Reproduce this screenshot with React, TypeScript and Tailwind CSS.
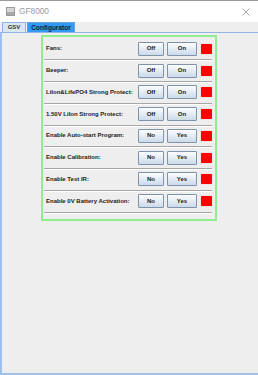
import React from "react";

const rows = [
  { label: "Fans:", a: "Off", b: "On" },
  { label: "Beeper:", a: "Off", b: "On" },
  { label: "LiIon&LifePO4 Strong Protect:", a: "Off", b: "On" },
  { label: "1.50V LiIon Strong Protect:", a: "Off", b: "On" },
  { label: "Enable Auto-start Program:", a: "No", b: "Yes" },
  { label: "Enable Calibration:", a: "No", b: "Yes" },
  { label: "Enable Test IR:", a: "No", b: "Yes" },
  { label: "Enable 0V Battery Activation:", a: "No", b: "Yes" },
];

function Btn({ text, w }: { text: string; w: string }) {
  return (
    <div
      className={`${w} h-[14px] flex items-center justify-center border border-[#7f93ab] rounded-[1px] bg-gradient-to-b from-[#fbfdff] to-[#ccdaea] text-[6px] font-bold text-[#1a1a1a]`}
    >
      {text}
    </div>
  );
}

export default function App() {
  return (
    <div
      className="w-[258px] h-[375px] flex flex-col bg-[#eeeeee] overflow-hidden"
      style={{ fontFamily: '"Liberation Sans", Arial, sans-serif' }}
    >
      {/* Title bar */}
      <div className="h-[22px] bg-white border-t border-[#9a9a9a] flex items-center pl-[6px] pr-[8px]">
        <div className="w-[9px] h-[9px] border border-[#9a9a9a] bg-[#d6d6d6] flex items-end">
          <div className="w-full h-[3px] bg-[#a8a8a8]" />
        </div>
        <span className="ml-[4px] text-[8.3px] text-[#9a9a9a]">GF8000</span>
        <svg className="ml-auto" width="8" height="8" viewBox="0 0 8 8">
          <path d="M0.5 0.5L7.5 7.5M7.5 0.5L0.5 7.5" stroke="#8a8a8a" strokeWidth="0.8" />
        </svg>
      </div>

      {/* Tabs */}
      <div className="h-[11px] flex items-end pl-[2px] border-b border-[#8fb4e8]">
        <div className="h-[10px] w-[24px] flex items-center justify-center border border-b-0 border-[#8fb4e8] bg-[#d9e6f6] text-[6px] font-bold text-[#333]">
          GSV
        </div>
        <div className="h-[10px] w-[48px] ml-[1px] flex items-center justify-center border border-b-0 border-[#6a9fd8] bg-[#3399f7] text-[6.5px] font-bold text-[#10204a]">
          Configurator
        </div>
      </div>

      {/* Content */}
      <div className="flex-1 border-l-2 border-b-2 border-[#9fc0ec] pt-[2px]">
        <div className="ml-[39px] w-[176px] border-2 border-[#90ee90] pt-[1.5px] pb-[6px]">
          {rows.map((r) => (
            <div
              key={r.label}
              className="h-[21.75px] ml-[1px] mr-[3px] flex items-center border-b border-[#a6a6a6] shadow-[0_1px_0_#ffffff]"
            >
              <span className="flex-1 pl-[2px] text-[6px] font-bold text-[#222] whitespace-nowrap">
                {r.label}
              </span>
              <div className="flex gap-[3px]">
                <Btn text={r.a} w="w-[26px]" />
                <Btn text={r.b} w="w-[30px]" />
              </div>
              <div className="ml-[4px] w-[11px] h-[10px] bg-[#ff0000] rounded-[1px] shadow-[0_0_1px_#ff7070]" />
            </div>
          ))}
        </div>
      </div>
    </div>
  );
}
